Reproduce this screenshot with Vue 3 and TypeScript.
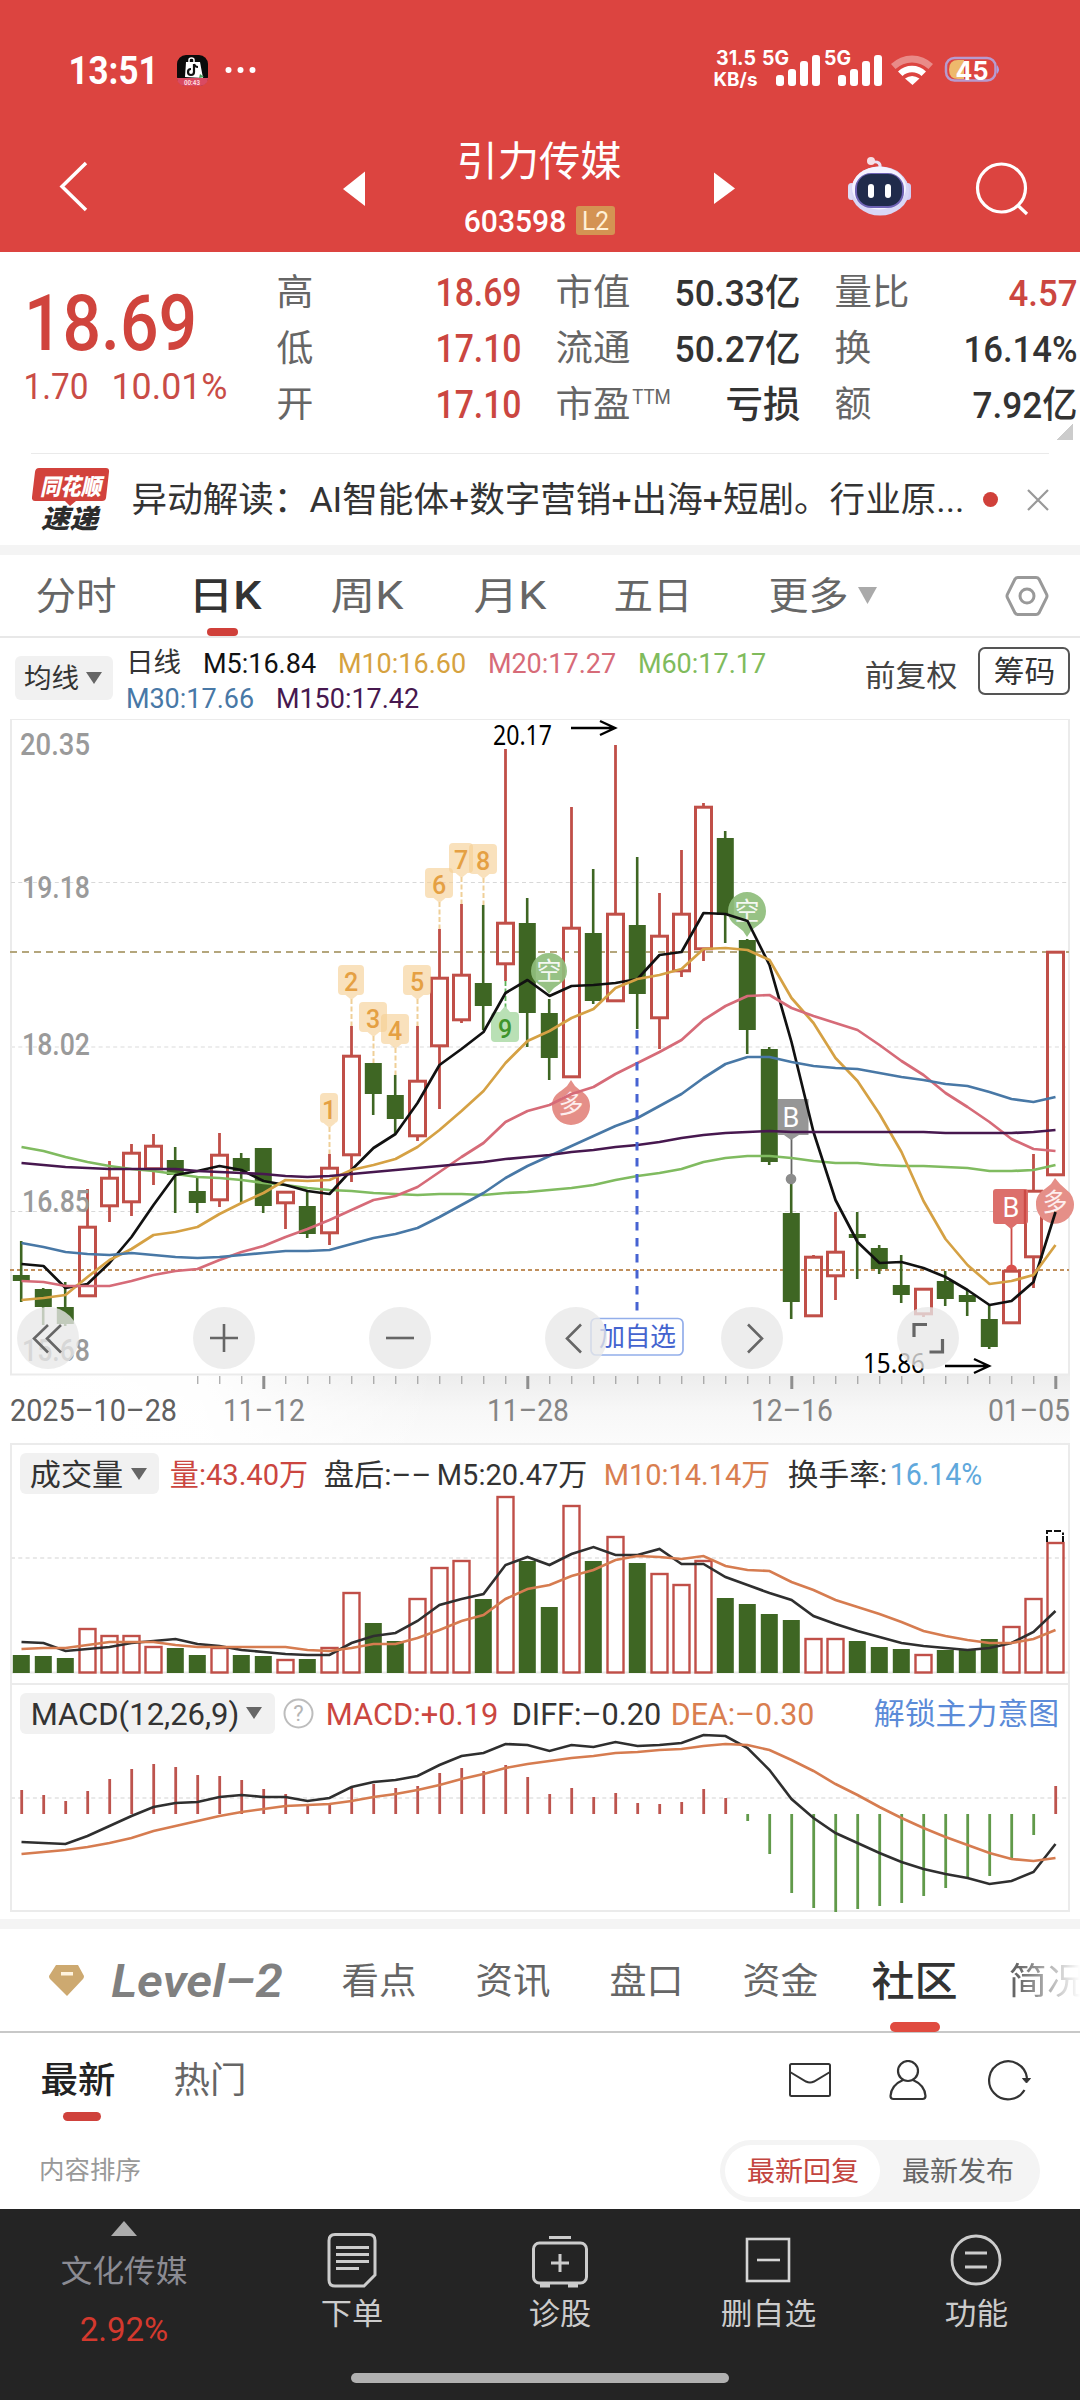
<script setup lang="ts">
import { h } from 'vue'

interface LabelProps { t: string; w: number; s: number; b?: number; sp?: boolean }

// A text box as high as its capitals and exactly w wide, so rows centre optically.
const Label = (p: LabelProps) =>
  h('svg', { width: p.w, height: Math.round(p.s * 0.72), overflow: 'visible', style: { display: 'block', flex: 'none' } }, [
    h('text', {
      x: -p.s * 0.04,
      y: Math.round(p.s * 0.72),
      'font-size': p.s,
      'font-weight': p.b || 400,
      fill: 'currentColor',
      textLength: p.w + p.s * 0.08,
      lengthAdjust: p.sp ? 'spacing' : 'spacingAndGlyphs',
    }, p.t),
  ])
Label.props = ['t', 'w', 's', 'b', 'sp']

const X0 = 21.5
const STEP = 22
const px = (i: number) => X0 + STEP * i
const line = (v: number[]) => v.map((y, i) => `${px(i)},${y}`).join(' ')

// up, high, body top, body bottom, low
const candles: number[][] = [
  [0, 1241, 1275, 1281, 1302], [0, 1288, 1289, 1307, 1325], [0, 1282, 1307, 1324, 1326], [1, 1189, 1226, 1297, 1297],
  [1, 1161, 1177, 1207, 1222], [1, 1144, 1152, 1203, 1216], [1, 1134, 1145, 1170, 1185], [0, 1147, 1160, 1175, 1213],
  [0, 1177, 1191, 1203, 1213], [1, 1133, 1154, 1201, 1207], [0, 1153, 1158, 1171, 1203], [0, 1148, 1148, 1206, 1213],
  [1, 1191, 1191, 1204, 1229], [0, 1190, 1206, 1234, 1238], [1, 1154, 1167, 1234, 1245], [1, 1026, 1055, 1156, 1182],
  [0, 1063, 1063, 1094, 1115], [0, 1075, 1095, 1119, 1133], [1, 1026, 1080, 1137, 1141], [1, 929, 977, 1047, 1109],
  [1, 904, 974, 1021, 1023], [0, 905, 983, 1006, 1030], [1, 749, 922, 965, 981], [0, 898, 923, 1013, 1047],
  [0, 999, 1013, 1058, 1080], [1, 807, 927, 1078, 1078], [0, 869, 933, 1001, 1004], [1, 745, 913, 1002, 1002],
  [0, 857, 925, 994, 1029], [1, 893, 935, 1019, 1049], [1, 850, 913, 972, 977], [1, 803, 806, 950, 961],
  [0, 831, 838, 915, 943], [0, 939, 940, 1030, 1054], [0, 1047, 1049, 1162, 1165], [0, 1180, 1213, 1302, 1319],
  [1, 1255, 1256, 1317, 1317], [1, 1212, 1251, 1277, 1300], [0, 1212, 1234, 1238, 1279], [0, 1245, 1248, 1269, 1274],
  [0, 1255, 1285, 1295, 1303], [1, 1288, 1288, 1315, 1317], [0, 1271, 1281, 1299, 1306], [0, 1290, 1295, 1302, 1316],
  [0, 1305, 1319, 1347, 1349], [1, 1270, 1270, 1324, 1324], [1, 1154, 1190, 1258, 1288], [1, 951, 951, 1176, 1176],
]

const ma = [
  { c: '#80bb60', v: [1147, 1151, 1157, 1162, 1166, 1169, 1171, 1174, 1177, 1178, 1180, 1183, 1185, 1188, 1190, 1191, 1193, 1194, 1195, 1194, 1194, 1195, 1193, 1192, 1190, 1188, 1185, 1180, 1176, 1173, 1169, 1162, 1158, 1156, 1156, 1158, 1161, 1163, 1163, 1165, 1166, 1166, 1167, 1168, 1171, 1171, 1170, 1165] },
  { c: '#111111', v: [1264, 1266, 1288, 1284, 1263, 1237, 1205, 1175, 1171, 1166, 1170, 1181, 1185, 1191, 1194, 1170, 1148, 1134, 1103, 1065, 1049, 1032, 993, 980, 996, 986, 985, 983, 979, 955, 952, 913, 914, 921, 965, 1042, 1132, 1200, 1242, 1263, 1262, 1268, 1277, 1290, 1305, 1301, 1282, 1212] },
  { c: '#d5a144', v: [1300, 1298, 1295, 1277, 1260, 1249, 1235, 1232, 1227, 1214, 1203, 1193, 1180, 1181, 1180, 1170, 1165, 1159, 1147, 1130, 1111, 1091, 1063, 1041, 1031, 1018, 1009, 988, 979, 975, 969, 949, 948, 950, 960, 998, 1023, 1058, 1081, 1114, 1152, 1201, 1239, 1265, 1284, 1281, 1275, 1245] },
  { c: '#d66b78', v: [1281, 1282, 1286, 1286, 1286, 1281, 1275, 1271, 1269, 1260, 1252, 1246, 1237, 1229, 1220, 1210, 1200, 1196, 1187, 1172, 1157, 1143, 1122, 1111, 1105, 1094, 1087, 1074, 1063, 1052, 1040, 1020, 1006, 996, 995, 1008, 1016, 1023, 1030, 1045, 1061, 1075, 1093, 1107, 1122, 1139, 1149, 1151] },
  { c: '#4878a6', v: [1243, 1247, 1252, 1254, 1255, 1253, 1255, 1257, 1258, 1257, 1255, 1253, 1251, 1251, 1250, 1244, 1238, 1234, 1228, 1217, 1205, 1193, 1178, 1166, 1156, 1146, 1136, 1126, 1118, 1106, 1094, 1078, 1064, 1057, 1057, 1062, 1066, 1068, 1069, 1073, 1077, 1080, 1084, 1086, 1092, 1099, 1102, 1097] },
  { c: '#47184f', v: [1163, 1165, 1167, 1168, 1169, 1169, 1169, 1169, 1171, 1172, 1173, 1174, 1176, 1177, 1176, 1174, 1172, 1170, 1168, 1166, 1164, 1162, 1159, 1157, 1155, 1152, 1150, 1147, 1145, 1142, 1138, 1135, 1133, 1132, 1131, 1132, 1132, 1132, 1132, 1132, 1132, 1132, 1133, 1133, 1133, 1133, 1132, 1130] },
]

const volumes = [1656, 1657, 1659, 1629, 1636, 1636, 1647, 1649, 1656, 1648, 1656, 1657, 1660, 1660, 1648, 1593, 1624, 1642, 1599, 1568, 1561, 1600, 1497, 1562, 1608, 1506, 1562, 1537, 1564, 1574, 1585, 1561, 1599, 1605, 1615, 1621, 1639, 1639, 1642, 1648, 1650, 1655, 1651, 1650, 1640, 1627, 1599, 1543]
const volM5 = [1642, 1643, 1651, 1649, 1647, 1643, 1641, 1639, 1644, 1646, 1650, 1652, 1654, 1655, 1655, 1643, 1636, 1633, 1621, 1605, 1599, 1594, 1565, 1557, 1565, 1554, 1547, 1555, 1555, 1549, 1564, 1564, 1577, 1585, 1593, 1600, 1616, 1624, 1631, 1637, 1643, 1646, 1648, 1650, 1648, 1643, 1632, 1611]
const volM10 = [1649, 1648, 1648, 1645, 1642, 1642, 1642, 1645, 1647, 1647, 1647, 1647, 1647, 1650, 1651, 1648, 1644, 1644, 1638, 1630, 1621, 1615, 1599, 1589, 1585, 1576, 1570, 1560, 1556, 1557, 1559, 1556, 1566, 1570, 1571, 1582, 1590, 1600, 1607, 1614, 1622, 1631, 1636, 1640, 1643, 1643, 1639, 1630]

const macd = [1790, 1795, 1801, 1791, 1779, 1769, 1764, 1767, 1775, 1776, 1780, 1789, 1794, 1806, 1805, 1788, 1784, 1788, 1786, 1773, 1768, 1771, 1765, 1777, 1794, 1788, 1797, 1793, 1803, 1804, 1802, 1789, 1798, 1821, 1854, 1893, 1908, 1912, 1909, 1906, 1903, 1896, 1888, 1877, 1876, 1858, 1835, 1786]
const diff = [1842, 1843, 1844, 1836, 1826, 1816, 1807, 1803, 1802, 1797, 1795, 1797, 1797, 1801, 1798, 1787, 1782, 1780, 1776, 1765, 1756, 1753, 1744, 1745, 1751, 1745, 1747, 1742, 1746, 1745, 1743, 1735, 1736, 1748, 1770, 1799, 1818, 1833, 1843, 1853, 1862, 1869, 1874, 1878, 1884, 1881, 1872, 1844]
const dea = [1854, 1852, 1850, 1847, 1843, 1838, 1831, 1826, 1821, 1816, 1812, 1809, 1806, 1805, 1804, 1801, 1797, 1794, 1790, 1785, 1779, 1774, 1768, 1764, 1761, 1758, 1756, 1753, 1752, 1750, 1749, 1746, 1744, 1745, 1750, 1760, 1771, 1784, 1795, 1807, 1818, 1828, 1837, 1845, 1853, 1859, 1861, 1858]

// digit, box left, box width, box top, stem end
const tags = [
  { n: '1', x: 320, w: 18, y: 1093, i: 14, e: 1154 },
  { n: '2', x: 338, w: 26, y: 965, i: 15, e: 1026 },
  { n: '3', x: 359, w: 28, y: 1002, i: 16, e: 1063 },
  { n: '4', x: 381, w: 28, y: 1014, i: 17, e: 1075 },
  { n: '5', x: 403, w: 28, y: 965, i: 18, e: 1026 },
  { n: '6', x: 425, w: 28, y: 868, i: 19, e: 929 },
  { n: '7', x: 449, w: 24, y: 843, i: 20, e: 904 },
  { n: '8', x: 469, w: 28, y: 844, i: 21, e: 905 },
]

const priceLabels = [
  { t: '20.35', x: 20, w: 70, y: 755 }, { t: '19.18', x: 22, w: 68, y: 898 }, { t: '18.02', x: 22, w: 68, y: 1055 },
  { t: '16.85', x: 22, w: 68, y: 1212 }, { t: '15.68', x: 22, w: 68, y: 1361 },
]
const dates = [
  { t: '11–12', x: 223 }, { t: '11–28', x: 487 }, { t: '12–16', x: 751 }, { t: '01–05', x: 988 },
]
const ticks = Array.from({ length: 40 }, (_, k) => k + 8)

const facts = [
  { a: '高', aw: 34, v: '18.69', vw: 83, r: true, c: '市值', d: '50.33亿', dw: 123, e: '量比', ew: 72, f: '4.57', fw: 66, fr: true },
  { a: '低', aw: 34, v: '17.10', vw: 83, r: true, c: '流通', d: '50.27亿', dw: 123, e: '换', ew: 34, f: '16.14%', fw: 111, fr: false },
  { a: '开', aw: 34, v: '17.10', vw: 83, r: true, c: '市盈', d: '亏损', dw: 72, e: '额', ew: 34, f: '7.92亿', fw: 102, fr: false },
]
</script>

<template>
  <div class="page">
    <header class="top">
      <div class="status">
        <Label class="time" t="13:51" :w="87" :s="39" :b="700" />
        <svg class="app" width="31" height="31" viewBox="0 0 31 31">
          <rect width="31" height="31" rx="9" fill="#0b0b0b" />
          <path d="M0 23h31v1a8 8 0 0 1-8 7H8a8 8 0 0 1-8-7z" fill="#d94a62" />
          <path d="M9 7h14l3 16-18-1z" fill="#fff" />
          <path d="M12 7V5q0-2 2.500-2T17 5v2" fill="none" stroke="#fff" stroke-width="1.500" />
          <path d="M17 9v8a3 3 0 1 1-3-3M17 9q1 3 4 3" fill="none" stroke="#111" stroke-width="2.200" />
          <path d="M23 19l4 3-5 1z" fill="#49a35a" />
          <text x="7" y="30" font-size="7.500" font-weight="700" fill="#ffd9de" textLength="16" lengthAdjust="spacingAndGlyphs">00:43</text>
        </svg>
        <svg class="dots" width="32" height="8" viewBox="0 0 32 8" fill="#fff">
          <circle cx="3.500" cy="4" r="3" /><circle cx="15.500" cy="4" r="3" /><circle cx="27.500" cy="4" r="3" />
        </svg>
        <svg class="signals" width="294" height="60" viewBox="710 40 294 60" fill="#fff" font-weight="700" font-family="Inter, Roboto, sans-serif">
          <text x="716" y="64.500" font-size="19.500" textLength="40" lengthAdjust="spacingAndGlyphs">31.5</text>
          <text x="713.500" y="86" font-size="18.500" textLength="44" lengthAdjust="spacingAndGlyphs">KB/s</text>
          <text x="762" y="65" font-size="20" textLength="27" lengthAdjust="spacingAndGlyphs">5G</text>
          <text x="824" y="65" font-size="20" textLength="27" lengthAdjust="spacingAndGlyphs">5G</text>
          <g v-for="x in [776, 838]" :key="x">
            <rect :x="x" y="75" width="8" height="11" rx="3" />
            <rect :x="x + 12" y="69" width="8" height="17" rx="3" />
            <rect :x="x + 24" y="61" width="8" height="25" rx="3" />
            <rect :x="x + 36" y="55" width="8" height="31" rx="3" />
          </g>
          <path d="M891 64a30 30 0 0 1 42 0l-4.500 5a24 24 0 0 0-33 0z" opacity=".38" />
          <path d="M898 71.500a20 20 0 0 1 28 0l-4.500 4.500a14 14 0 0 0-19 0z" />
          <path d="M905 78.500q7-5 14.500 0l-7 6.500z" />
          <path d="M964 60h-6q-9 0-9 9.500t9 9.500h6z" fill="#eeb96c" />
          <rect x="946" y="58" width="49.500" height="22.500" rx="8.500" fill="none" stroke="#b79bcf" stroke-width="2.500" />
          <path d="M997 65q4 4.500 0 9z" fill="#a9a0e6" />
          <text x="955.500" y="79.500" font-size="26" textLength="33" lengthAdjust="spacingAndGlyphs">45</text>
        </svg>
      </div>
      <nav class="nav">
        <svg class="back" width="30" height="52" viewBox="0 0 30 52" fill="none" stroke="#fff" stroke-width="3.500"><path d="M27 3L3 26.500L27 50" /></svg>
        <svg class="prev" width="22" height="36" viewBox="0 0 22 36" fill="#fff"><path d="M0 18L22 0.500V35z" /></svg>
        <div class="title">
          <Label t="引力传媒" :w="162" :s="41" />
          <div class="code">
            <Label t="603598" :w="100" :s="32" :b="500" />
            <span class="l2"><Label t="L2" :w="25" :s="25" /></span>
          </div>
        </div>
        <svg class="next" width="21" height="33" viewBox="0 0 21 33" fill="#fff"><path d="M21 16.500L0 0.500V32z" /></svg>
        <svg class="robot" width="66" height="62" viewBox="847 156 66 62">
          <path d="M880 168q1-7-7-6" fill="none" stroke="#e9e0f4" stroke-width="3" />
          <circle cx="871" cy="161" r="4" fill="#f6dfe6" />
          <rect x="848" y="183" width="7" height="17" rx="3.500" fill="#dedcf6" /><rect x="904" y="183" width="7" height="17" rx="3.500" fill="#d2cef5" />
          <ellipse cx="880" cy="191" rx="29" ry="24.500" fill="#d9d7f6" />
          <ellipse cx="879" cy="188" rx="27" ry="21.500" fill="#f4f2ff" />
          <rect x="855" y="173" width="49" height="35" rx="16" fill="#6f63b5" />
          <rect x="857" y="174" width="45" height="32" rx="14" fill="#202b4b" />
          <rect x="868" y="184" width="6" height="14" rx="3" fill="#fff" /><rect x="885" y="184" width="6" height="14" rx="3" fill="#fff" />
        </svg>
        <svg class="search" width="56" height="56" viewBox="0 0 56 56" fill="none" stroke="#fff" stroke-width="3.200"><circle cx="26.500" cy="27" r="24" /><path d="M43 44.500L52 53" /></svg>
      </nav>
    </header>

    <section class="quote">
      <div class="last">
        <Label t="18.69" :w="167" :s="77" :b="500" />
        <div class="change"><Label t="1.70" :w="62" :s="37" /><Label t="10.01%" :w="113" :s="37" /></div>
      </div>
      <div class="facts">
        <div v-for="f in facts" :key="f.a" class="fact">
          <Label class="k" :t="f.a" :w="f.aw" :s="36" />
          <Label class="v red" :t="f.v" :w="f.vw" :s="38" :b="500" />
          <div class="k pe"><Label :t="f.c" :w="72" :s="36" /><Label v-if="f.c === '市盈'" class="ttm" t="TTM" :w="37" :s="20" /></div>
          <Label class="v" :t="f.d" :w="f.dw" :s="37" :b="500" />
          <Label class="k" :t="f.e" :w="f.ew" :s="36" />
          <Label class="v" :class="{ red: f.fr }" :t="f.f" :w="f.fw" :s="37" :b="500" />
        </div>
      </div>
      <i class="corner"></i>
    </section>

    <section class="news">
      <svg class="logo" width="78" height="64" viewBox="32 467 78 64" font-weight="900" font-style="italic">
        <path d="M39 467h67q3.500 0 3 4l-3 26q-.5 3-4 3H76l-6 5-5-5H35q-3.500 0-3-4l3-25q.5-4 4-4z" fill="#d2423c" />
        <text x="40" y="494" font-size="23" fill="#fff" textLength="61" lengthAdjust="spacingAndGlyphs">同花顺</text>
        <text x="41" y="527" font-size="26" fill="#2c2c2c" textLength="57" lengthAdjust="spacingAndGlyphs">速递</text>
      </svg>
      <Label t="异动解读：AI智能体+数字营销+出海+短剧。行业原..." :w="830" :s="35" />
      <i class="reddot"></i>
      <svg class="close" width="22" height="22" viewBox="0 0 22 22" stroke="#999" stroke-width="2.200"><path d="M1 1L21 21M21 1L1 21" /></svg>
    </section>
    <div class="band"></div>

    <nav class="periods">
      <Label t="分时" :w="78" :s="38" sp />
      <Label class="on" t="日K" :w="70" :s="38" :b="500" sp />
      <Label t="周K" :w="70" :s="38" sp />
      <Label t="月K" :w="70" :s="38" sp />
      <Label t="五日" :w="76" :s="38" sp />
      <div class="more"><Label t="更多" :w="77" :s="38" sp /><svg width="19" height="17" viewBox="0 0 19 17"><path d="M0 0h19L9.500 17z" fill="#aaa" /></svg></div>
      <svg width="44" height="42" viewBox="0 0 44 42" fill="none" stroke="#999" stroke-width="3"><path d="M13 2.500h18q2 0 3 1.600l7.500 15q1 1.900 0 3.800l-7.500 15q-1 1.600-3 1.600H13q-2 0-3-1.600l-7.500-15q-1-1.900 0-3.800l7.500-15q1-1.600 3-1.600z" /><circle cx="22" cy="21" r="7" /></svg>
    </nav>

    <section class="averages">
      <div class="pick"><Label t="均线" :w="53" :s="27" /><svg width="16" height="12" viewBox="0 0 16 12"><path d="M0 0h16L8 12z" fill="#666" /></svg></div>
      <div class="values">
        <div class="row">
          <Label t="日线" :w="53" :s="27" /><Label class="m5" t="M5:16.84" :w="111" :s="28" />
          <Label class="m10" t="M10:16.60" :w="126" :s="28" /><Label class="m20" t="M20:17.27" :w="126" :s="28" /><Label class="m60" t="M60:17.17" :w="126" :s="28" />
        </div>
        <div class="row"><Label class="m30" t="M30:17.66" :w="126" :s="28" /><Label class="m150" t="M150:17.42" :w="141" :s="28" /></div>
      </div>
      <Label class="fq" t="前复权" :w="90" :s="30" />
      <div class="chips"><Label t="筹码" :w="59" :s="30" /></div>
    </section>

    <svg class="chart" width="1080" height="724" viewBox="0 719 1080 724">
      <defs>
        <linearGradient id="axisX"><stop offset="0" stop-color="#fff" /><stop offset=".18" stop-color="#fff" stop-opacity=".95" /><stop offset=".4" stop-color="#fff" stop-opacity="0" /></linearGradient>
        <linearGradient id="axisY" x2="0" y2="1"><stop offset="0" stop-color="#ededed" /><stop offset=".5" stop-color="#f7f7f7" /><stop offset="1" stop-color="#fbfbfb" /></linearGradient>
      </defs>
      <rect x="12" y="1375" width="1058" height="68" fill="url(#axisY)" />
      <rect x="11" y="1375" width="1059" height="68" fill="url(#axisX)" />
      <rect x="11" y="719" width="1058" height="655.500" fill="none" stroke="#ebebeb" stroke-width="2" />
      <path d="M11 882.500H1069M11 1211.500H1069" stroke="#d8d8d8" stroke-width="1" stroke-dasharray="4 3.300" />
      <path d="M11 1047H1069" stroke="#ededed" stroke-width="2" stroke-dasharray="4 3.300" />
      <path d="M10 952H1069" stroke="#b4a67c" stroke-width="2" stroke-dasharray="7 5" />
      <path d="M10 1270H1069" stroke="#c08f5c" stroke-width="2" stroke-dasharray="4 3" />
      <g v-for="(c, i) in candles" :key="i">
        <template v-if="c[0]">
          <path :d="`M${px(i)} ${c[1]}V${c[2]}M${px(i)} ${c[3]}V${c[4]}`" stroke="#c04f48" stroke-width="2.800" />
          <rect :x="px(i) - 8" :y="c[2] + 1.200" width="16" :height="c[3] - c[2] - 2.400" fill="none" stroke="#c04f48" stroke-width="3" />
        </template>
        <template v-else>
          <path :d="`M${px(i) - .3} ${c[1]}V${c[4]}`" stroke="#3e6623" stroke-width="2.600" />
          <rect :x="px(i) - 8.700" :y="c[2]" width="17" :height="c[3] - c[2]" fill="#3e6623" />
        </template>
      </g>
      <g>
        <g fill="#8fbd7c" fill-opacity=".93">
          <path d="M531 971a18 18 0 1 1 36 0c0 11-9 13-14 18l-4 5l-4-5c-5-5-14-7-14-18z" />
          <path d="M728 911a19 19 0 1 1 38 0c0 12-9 14-15 20l-4 6l-4-6c-6-6-15-8-15-20z" />
        </g>
        <g fill="#e58f88">
          <path d="M552 1106a19 19 0 1 0 38 0c0-12-9-14-15-20l-4-6l-4 6c-6 6-15 8-15 20z" />
          <path d="M1036 1204a19 19 0 1 0 34 -11l-10-9l-5-6l-4 6c-6 6-15 8-15 20z" />
        </g>
        <g fill="#f4f8f2" font-size="25" text-anchor="middle">
          <text x="549" y="980">空</text><text x="747" y="920">空</text>
          <text x="571" y="1113" fill="#fdeeee">多</text><text x="1055" y="1211" fill="#fdeeee">多</text>
        </g>
      </g>
      <g v-for="t in tags" :key="t.n">
        <path :d="`M${px(t.i)} ${t.y + 34}V${t.e}`" stroke="#efcf98" stroke-width="2" stroke-dasharray="5 2.500" />
        <rect :x="t.x" :y="t.y" :width="t.w" height="30" rx="4" fill="#f6cf93" fill-opacity=".62" />
        <path :d="`M${px(t.i) - 6} ${t.y + 30}h12l-6 5z`" fill="#f6cf93" fill-opacity=".62" />
        <text :x="t.x + t.w / 2" :y="t.y + 26" font-size="25" font-weight="500" text-anchor="middle" fill="#e5a043">{{ t.n }}</text>
      </g>
      <path d="M505.500 981V1008" stroke="#5cb357" stroke-width="1.800" stroke-dasharray="5 2.500" />
      <path d="M495 1012h5l5-6l5 6h5q4 0 4 4v22q0 4-4 4H495q-4 0-4-4V1016q0-4 4-4z" fill="#b9e0b5" />
      <text x="505" y="1038" font-size="25" font-weight="500" text-anchor="middle" fill="#3f952c">9</text>

      <path d="M791.500 1138V1178" stroke="#666" stroke-width="1.800" />
      <circle cx="791" cy="1179" r="5.300" fill="#8c8c8c" />
      <path d="M778 1099h30.500v36H799l-8 5-7-5h-6z" fill="#969696" />
      <text x="791" y="1127" font-size="27" text-anchor="middle" fill="#fff">B</text>
      <path d="M1011.500 1228V1268" stroke="#cc4a45" stroke-width="1.800" />
      <path d="M1006 1270a5.500 5.500 0 0 1 11 0z" fill="#d9514c" />
      <path d="M996 1189h29q3 0 3 3v29q0 3-3 3h-8l-6 5-6-5h-9q-3 0-3-3v-29q0-3 3-3z" fill="#dc6f6b" />
      <text x="1011" y="1217" font-size="27" text-anchor="middle" fill="#fff">B</text>
      <path d="M1025 1190V1224" stroke="#cc4a45" stroke-width="2.400" />

      <polyline v-for="m in ma" :key="m.c" :points="line(m.v)" fill="none" :stroke="m.c" stroke-width="2.700" stroke-linejoin="round" />

      <path d="M637 1030V1318" stroke="#4663d2" stroke-width="3" stroke-dasharray="8.500 7.500" />
      <rect x="591" y="1318.500" width="92" height="36.500" rx="5" fill="#fff" stroke="#93aeea" stroke-width="1.700" />
      <text x="599" y="1346" font-size="26" fill="#4464cf" textLength="77">加自选</text>

      <g font-size="31" font-weight="500" fill="#9a9a9a">
        <text v-for="p in priceLabels" :key="p.t" :x="p.x" :y="p.y" :textLength="p.w" lengthAdjust="spacingAndGlyphs">{{ p.t }}</text>
      </g>
      <g font-family="'Noto Sans'" font-size="27.500" fill="#000">
        <text x="493" y="745" textLength="59" lengthAdjust="spacingAndGlyphs">20.17</text>
        <text x="863" y="1373" textLength="62" lengthAdjust="spacingAndGlyphs">15.86</text>
      </g>
      <path d="M571 728H614M600 721L615 728L600 735M945 1366H988M974 1359L989 1366L974 1373" fill="none" stroke="#000" stroke-width="2.400" />

      <g v-for="k in 6" :key="k"><circle :cx="48 + 176 * (k - 1)" cy="1338" r="31" fill="#e8e8e8" fill-opacity=".78" /></g>
      <g fill="none" stroke="#666" stroke-width="2.600">
        <path d="M48 1325L34 1338.500L48 1352.500M61 1325L47 1338.500L61 1352.500" />
        <path d="M210 1338H238M224 1324V1352" />
        <path d="M386 1338H414" />
        <path d="M581 1324.500L567 1338.500L581 1352.500" />
        <path d="M748 1324.500L762 1338.500L748 1352.500" />
        <path d="M914 1337V1324.500H927M942.500 1339V1352H929.500" stroke-width="3.200" />
      </g>

      <path v-for="k in ticks" :key="k" :d="`M${px(k) + .3} 1376V${(k - 11) % 12 ? 1384 : 1389}`" stroke="#8f8f8f" :stroke-width="(k - 11) % 12 ? 1 : 3" />
      <g font-size="31" fill="#858585">
        <text x="10" y="1421" fill="#606060" textLength="167" lengthAdjust="spacingAndGlyphs">2025–10–28</text>
        <text v-for="d in dates" :key="d.t" :x="d.x" y="1421" textLength="82" lengthAdjust="spacingAndGlyphs">{{ d.t }}</text>
      </g>
    </svg>

    <section class="panel volume">
      <div class="phead vhead">
        <div class="pick"><Label t="成交量" :w="91" :s="30" /><svg width="16" height="12" viewBox="0 0 16 12"><path d="M0 0h16L8 12z" fill="#666" /></svg></div>
        <Label class="red" t="量:43.40万" :w="136" :s="30" /><Label t="盘后:––" :w="105" :s="30" /><Label t="M5:20.47万" :w="148" :s="30" />
        <Label class="orange" t="M10:14.14万" :w="164" :s="30" /><Label t="换手率:" :w="97" :s="30" /><Label class="sky" t="16.14%" :w="90" :s="31" />
      </div>
      <svg width="1056" height="187" viewBox="12 1496 1056 187" overflow="visible">
        <path d="M11 1558H1069" stroke="#e9e9e9" stroke-width="2" stroke-dasharray="4 3.300" />
        <path d="M11 1672.500H1069" stroke="#e9e9e9" stroke-width="2" />
        <template v-for="(v, i) in volumes" :key="i">
          <rect v-if="candles[i][0]" :x="px(i) - 8" :y="v" width="16" :height="1672.500 - v" fill="#fff" fill-opacity=".01" stroke="#c04f48" stroke-width="2.400" />
          <rect v-else :x="px(i) - 8.700" :y="v - 1" width="17" :height="1674 - v" fill="#3e6623" />
        </template>
        <path d="M1047 1542V1536M1063 1542V1536M1047 1534V1531H1052M1054 1531H1061M1063 1532.500V1535" fill="none" stroke="#111" stroke-width="2" />
        <polyline :points="line(volM5)" fill="none" stroke="#2f2f2f" stroke-width="2.600" />
        <polyline :points="line(volM10)" fill="none" stroke="#d67c50" stroke-width="2.600" />
      </svg>
    </section>

    <section class="panel macd">
      <div class="phead mhead">
        <div class="pick"><Label t="MACD(12,26,9)" :w="206" :s="32" /><svg width="16" height="12" viewBox="0 0 16 12"><path d="M0 0h16L8 12z" fill="#666" /></svg></div>
        <svg width="31" height="31" viewBox="0 0 31 31"><circle cx="15.500" cy="15.500" r="14" fill="none" stroke="#bdbdbd" stroke-width="2" /><text x="15.500" y="23" text-anchor="middle" font-size="22" fill="#b5b5b5">?</text></svg>
        <Label class="red" t="MACD:+0.19" :w="170" :s="32" /><Label t="DIFF:–0.20" :w="147" :s="32" /><Label class="orange" t="DEA:–0.30" :w="141" :s="32" />
        <Label class="unlock" t="解锁主力意图" :w="183" :s="30" />
      </div>
      <svg width="1056" height="176" viewBox="12 1735 1056 176" overflow="visible">
        <path d="M11 1798H1069" stroke="#e9e9e9" stroke-width="2" stroke-dasharray="4 3.300" />
        <path v-for="(m, i) in macd" :key="i" :d="`M${px(i) + .2} 1814V${m}`" :stroke="m < 1814 ? '#bd544e' : '#619a4a'" stroke-width="2.800" />
        <polyline :points="line(diff)" fill="none" stroke="#2f2f2f" stroke-width="2.600" />
        <polyline :points="line(dea)" fill="none" stroke="#d67c50" stroke-width="2.600" />
      </svg>
    </section>
    <div class="band band2"></div>

    <nav class="sections">
      <svg width="36" height="33" viewBox="0 0 36 33"><path d="M7 1h22l6 11q0 2-1 3L18 32L1 15q-1-1-1-3z" fill="#cda970" /><rect x="12" y="8" width="12" height="3.500" fill="#fff4df" /></svg>
      <Label class="level" t="Level–2" :w="168" :s="46" :b="600" />
      <Label t="看点" :w="72" :s="36" /><Label t="资讯" :w="72" :s="36" /><Label t="盘口" :w="71" :s="36" /><Label t="资金" :w="73" :s="36" />
      <Label class="on" t="社区" :w="83" :s="41" :b="500" /><Label class="fade" t="简况" :w="74" :s="36" />
    </nav>

    <section class="feed">
      <div class="ftabs">
        <Label class="on" t="最新" :w="72" :s="36" :b="500" /><Label t="热门" :w="70" :s="36" />
        <svg width="42" height="34" viewBox="0 0 42 34" fill="none" stroke="#333" stroke-width="2"><rect x="1" y="1" width="40" height="32" rx="1.500" /><path d="M1 9L17 18.500q4 2 8 0L41 9" /></svg>
        <svg width="38" height="41" viewBox="0 0 38 41" fill="none" stroke="#333" stroke-width="2.200"><circle cx="19" cy="11" r="10" /><path d="M14 20C7 23 2 29 1.500 36q0 3 3 3h29q3 0 3-3C36 29 31 23 24 20" /></svg>
        <svg width="44" height="41" viewBox="0 0 44 41" fill="none" stroke="#333" stroke-width="2.200"><path d="M37.500 30A19 19 0 1 1 40 18" /><path d="M35.500 18.500h8L39.500 23z" fill="#333" stroke-width="1" /></svg>
      </div>
      <div class="sort">
        <Label t="内容排序" :w="100" :s="25" />
        <div class="switch"><span class="cur"><Label t="最新回复" :w="110" :s="27.500" /></span><Label t="最新发布" :w="110" :s="27.500" /></div>
      </div>
    </section>

    <footer class="bar">
      <div class="cells">
        <div class="index">
          <svg width="26" height="15" viewBox="0 0 26 15"><path d="M13 0L26 15H0z" fill="#acacac" /></svg>
          <Label t="文化传媒" :w="124" :s="31" /><Label class="pct" t="2.92%" :w="86" :s="33" />
        </div>
        <div class="act">
          <svg width="60" height="60" viewBox="322 2230 60 60" fill="none" stroke="#ccc" stroke-width="3"><path d="M335 2234.500h34q6 0 6 6V2275L364 2286H335q-6 0-6-6V2240.500q0-6 6-6z" /><path d="M336 2247.500h33M336 2254.500h33M336 2261.500h33M336 2268.500h23" /></svg>
          <Label t="下单" :w="60" :s="30" />
        </div>
        <div class="act">
          <svg width="60" height="60" viewBox="530 2230 60 60" fill="none" stroke="#ccc" stroke-width="3"><rect x="533.500" y="2243" width="53" height="40" rx="6" /><path d="M549 2237.500h22M551 2263h18M560 2254V2272" /><path d="M540 2285.500h10M568 2285.500h10" stroke-width="4" /></svg>
          <Label t="诊股" :w="60" :s="30" />
        </div>
        <div class="act">
          <svg width="60" height="60" viewBox="738 2230 60 60" fill="none" stroke="#d5d5d5" stroke-width="2.600"><rect x="747" y="2239" width="42" height="42" /><path d="M757 2260h23" /></svg>
          <Label t="删自选" :w="93" :s="30" />
        </div>
        <div class="act">
          <svg width="60" height="60" viewBox="946 2230 60 60" fill="none" stroke="#ccc" stroke-width="2.800"><circle cx="976" cy="2260" r="24" /><path d="M965 2253h22M965 2267h22" /></svg>
          <Label t="功能" :w="61" :s="30" />
        </div>
      </div>
      <i class="home"></i>
    </footer>
  </div>
</template>

<style>
body { margin: 0; background: #fff; }
</style>

<style scoped>
.page { width: 1080px; height: 2400px; overflow: hidden; background: #fff; color: #333; font-family: Roboto, "Noto Sans CJK SC", sans-serif; }
svg { display: block; flex: none; }
i { display: block; }
.red { color: #cb4640; }
.orange { color: #d97e50; }
.sky { color: #60a8dc; }

.top { height: 252px; background: #dc4440; color: #fff; }
.status { height: 60px; padding: 40px 76px 10px 70px; display: flex; align-items: center; }
.app { margin-left: 20px; }
.dots { margin-left: 17px; }
.signals { margin-left: auto; }
.nav { height: 142px; display: grid; align-items: center; grid-template-columns: 284px 115px 256px 133px 128px 60px; padding-left: 59px; }
.back { margin-top: 10px; }
.prev, .next { margin-top: 15px; }
.robot { margin-top: 12px; }
.search { margin-top: 15px; }
.title { display: flex; flex-direction: column; align-self: start; padding-top: 36px; gap: 33px; }
.code { display: flex; align-items: center; gap: 11px; padding-left: 7px; }
.l2 { width: 39px; height: 29px; margin: -3px 0; border-radius: 3px; background: #d49353; color: #fff0d6; display: flex; align-items: center; justify-content: center; }
.nav > .prev, .nav > .next { justify-self: start; }

.quote { position: relative; height: 201px; display: flex; }
.last { width: 278px; padding-top: 43px; box-sizing: border-box; color: #d0443d; }
.last > svg { margin-left: 27px; }
.change { display: flex; gap: 26px; padding: 22px 0 0 25px; color: #c94c46; }
.facts { width: 802px; padding-top: 12px; }
.fact { height: 56px; display: grid; align-items: center; grid-template-columns: 150px 92px 37px 112px 130px 37px 92px 148px; }
.fact > :nth-child(2) { justify-self: end; grid-column: 2; }
.fact > :nth-child(3) { grid-column: 4; }
.fact > :nth-child(4) { justify-self: end; grid-column: 5; }
.fact > :nth-child(5) { grid-column: 7; }
.fact > :nth-child(6) { justify-self: end; grid-column: 8; }
.k { color: #666; }
.pe { display: flex; gap: 4px; align-items: center; }
.ttm { margin-top: -14px; }
.corner { position: absolute; right: 7px; bottom: 13px; width: 16px; height: 16px; background: linear-gradient(135deg, transparent 50%, #ccc 50%); }

.news { height: 91px; margin: 0 31px; border-top: 1px solid #eaeaea; display: flex; align-items: center; }
.logo { margin: 0 23px 0 1px; }
.reddot { width: 15px; height: 15px; margin-left: 20px; border-radius: 50%; background: #d0403a; }
.close { margin-left: auto; }
.band { height: 10px; background: #f4f4f4; }

.periods { height: 81px; padding-left: 37px; border-bottom: 2px solid #e8e8e8; display: grid; align-items: center; grid-template: 81px 0 / 153px 142px 143px 140px 155px 235px 50px; color: #666; }
.periods::after { content: ""; grid-row: 2; grid-column: 2; align-self: end; justify-self: start; width: 31px; height: 8px; margin: 0 0 0 17px; border-radius: 4px; background: #d0403a; }
.more { display: flex; align-items: center; gap: 11px; }
.on { color: #333; }

.averages { height: 81px; display: flex; }
.pick { background: #f1f1f1; border-radius: 6px; color: #333; display: flex; align-items: center; justify-content: space-between; box-sizing: border-box; }
.averages .pick { width: 98px; height: 44px; margin: 18px 0 0 15px; padding: 0 11px 0 10px; }
.values { width: 753px; padding: 15px 0 0 14px; box-sizing: border-box; }
.row { display: flex; gap: 24px; height: 20px; margin-bottom: 15px; }
.m5 { color: #111; } .m10 { color: #d6a23f; } .m20 { color: #d76b78; } .m60 { color: #80bb5c; } .m30 { color: #4878a6; } .m150 { color: #47184f; }
.fq { margin-top: 26px; color: #444; }
.chips { width: 92px; height: 48px; margin: 9px 0 0 22px; border: 2px solid #555; border-radius: 7px; box-sizing: border-box; display: flex; align-items: center; justify-content: center; }

.panel { margin: 0 10px; border: 2px solid #ebebeb; box-sizing: border-box; }
.volume { height: 240px; border-bottom: 0; }
.macd { height: 229px; }
.phead { height: 50px; display: grid; align-items: center; }
.vhead { height: 51px; padding-left: 8px; grid-template-columns: 151px 154px 113px 167px 184px 102px 100px; }
.mhead { padding-left: 8px; grid-template-columns: 263px 44px 186px 159px 203px 190px; }
.vhead .pick { width: 139px; height: 41px; padding: 0 12px 0 11px; margin-top: 6px; }
.mhead .pick { width: 255px; height: 41px; padding: 0 13px 0 12px; margin-top: 6px; }
.vhead > svg, .mhead > svg { margin-top: 6px; }
.unlock { color: #5b8bd8; }

.band2 { margin-top: 7px; }
.sections { height: 102px; padding-left: 49px; border-bottom: 2px solid #c8c8c8; display: grid; align-items: center; grid-template: 103px 0 / 64px 230px 134px 134px 133px 129px 137px 80px; color: #666; }
.sections::after { content: ""; grid-row: 2; grid-column: 7; align-self: end; width: 50px; height: 10px; margin-left: 17px; border-radius: 5px; background: #e04b40; }
.level { color: #808080; font-style: italic; }
.fade { -webkit-mask-image: linear-gradient(90deg, #000 10%, transparent 95%); mask-image: linear-gradient(90deg, #000 10%, transparent 95%); padding: 10px 0; }
.ftabs { height: 92px; padding-left: 42px; display: grid; align-items: center; grid-template: 94px 0 / 133px 614px 100px 98px 50px; color: #666; }
.ftabs::after { content: ""; grid-row: 2; grid-column: 1; align-self: end; width: 38px; height: 9px; margin: 0 0 6px 21px; border-radius: 5px; background: #cf423c; }
.feed { height: 176px; }
.ftabs .on { color: #222; }
.sort { height: 92px; padding: 0 40px; display: flex; align-items: center; justify-content: space-between; color: #999; }
.sort > svg { margin-top: -2px; }
.switch { width: 320px; height: 62px; border-radius: 31px; background: #f4f4f4; color: #666; display: flex; align-items: center; }
.cur { width: 155px; height: 52px; margin: 0 23px 0 5px; border-radius: 26px; background: #fff; color: #c3453f; display: flex; align-items: center; justify-content: center; }

.bar { height: 191px; background: #242424; color: #ccc; }
.cells { height: 164px; display: grid; grid-template-columns: 248px 208px 208px 208px 208px; }
.index { display: flex; flex-direction: column; align-items: center; padding-top: 12px; color: #8b8b93; gap: 24px; }
.index > :last-child { margin-top: 11px; color: #d4392e; }
.act { display: flex; flex-direction: column; align-items: center; gap: 12px; padding-top: 21px; }
.home { width: 378px; height: 10px; margin: 0 auto; border-radius: 5px; background: #b1b1b1; }
</style>
